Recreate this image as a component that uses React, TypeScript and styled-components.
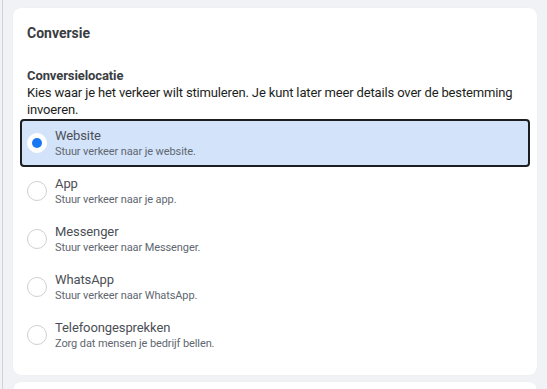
import React, { useState } from 'react';
import styled, { createGlobalStyle } from 'styled-components';

const GlobalStyle = createGlobalStyle`
  html, body {
    margin: 0;
    padding: 0;
    background: #f0f2f5;
    font-family: Roboto, "Liberation Sans", Arial, sans-serif;
    overflow: hidden;
  }
`;

type Option = {
  id: string;
  title: string;
  subtitle: string;
};

const options: Option[] = [
  { id: 'website', title: 'Website', subtitle: 'Stuur verkeer naar je website.' },
  { id: 'app', title: 'App', subtitle: 'Stuur verkeer naar je app.' },
  { id: 'messenger', title: 'Messenger', subtitle: 'Stuur verkeer naar Messenger.' },
  { id: 'whatsapp', title: 'WhatsApp', subtitle: 'Stuur verkeer naar WhatsApp.' },
  { id: 'phone', title: 'Telefoongesprekken', subtitle: 'Zorg dat mensen je bedrijf bellen.' },
];

const App = () => {
  const [selected, setSelected] = useState('website');

  return (
    <>
      <GlobalStyle />
      <Page>
        <Column>
          <Card>
            <CardTitle>Conversie</CardTitle>
            <Section>
              <Label>Conversielocatie</Label>
              <Description>
                Kies waar je het verkeer wilt stimuleren. Je kunt later meer details over de bestemming
                invoeren.
              </Description>
              <OptionList>
                {options.map((o) => (
                  <OptionRow
                    key={o.id}
                    $active={selected === o.id}
                    onClick={() => setSelected(o.id)}
                  >
                    <Radio $active={selected === o.id} />
                    <OptionText>
                      <OptionTitle>{o.title}</OptionTitle>
                      <OptionSub>{o.subtitle}</OptionSub>
                    </OptionText>
                  </OptionRow>
                ))}
              </OptionList>
            </Section>
          </Card>
          <Card />
        </Column>
      </Page>
    </>
  );
};

export default App;

const Page = styled.div`
  height: 389px;
  overflow: hidden;
  margin-left: 2px;
  border-left: 1px solid #d0d3d7;
  padding: 8px 10px 0 10px;
  box-sizing: border-box;
`;

const Column = styled.div`
  width: 524px;
  display: flex;
  flex-direction: column;
  gap: 7px;
`;

const Card = styled.div`
  background: #fff;
  border-radius: 8px;
  padding: 16px 7px 16px;
  min-height: 8px;
  box-shadow: 0 0 1px rgba(0, 0, 0, 0.08);
`;

const CardTitle = styled.h2`
  margin: 0 0 0 7px;
  font-size: 14px;
  line-height: 18px;
  font-weight: 700;
  color: #3a3d42;
`;

const Section = styled.div`
  margin-top: 25px;
`;

const Label = styled.div`
  padding: 0 7px;
  font-size: 13px;
  line-height: 17px;
  font-weight: 700;
  color: #3a3d42;
  letter-spacing: -0.1px;
`;

const Description = styled.p`
  margin: 0;
  padding: 0 7px;
  font-size: 13px;
  line-height: 17px;
  letter-spacing: -0.15px;
  color: #1c1e21;
`;

const OptionList = styled.div`
  margin-top: 1px;
  display: flex;
  flex-direction: column;
`;

const OptionRow = styled.div<{ $active: boolean }>`
  height: 48px;
  box-sizing: border-box;
  display: flex;
  align-items: center;
  gap: 8px;
  padding: 0 5px;
  border-radius: 4px;
  border: 2px solid ${({ $active }) => ($active ? '#1c1e21' : 'transparent')};
  background: ${({ $active }) => ($active ? '#d3e3fa' : 'transparent')};
  cursor: pointer;
`;

const Radio = styled.span<{ $active: boolean }>`
  position: relative;
  width: 20px;
  height: 20px;
  flex: none;
  border-radius: 50%;
  box-sizing: border-box;
  background: #fff;
  border: 1px solid ${({ $active }) => ($active ? '#fff' : '#ccd0d5')};
  &::after {
    content: '';
    display: ${({ $active }) => ($active ? 'block' : 'none')};
    position: absolute;
    left: 4px;
    top: 4px;
    width: 10px;
    height: 10px;
    border-radius: 50%;
    background: #1877f2;
  }
`;

const OptionText = styled.div`
  display: flex;
  flex-direction: column;
`;

const OptionTitle = styled.span`
  font-size: 13px;
  line-height: 16px;
  letter-spacing: -0.1px;
  color: #4b4f56;
`;

const OptionSub = styled.span`
  font-size: 11px;
  line-height: 15px;
  letter-spacing: -0.1px;
  color: #606770;
`;
